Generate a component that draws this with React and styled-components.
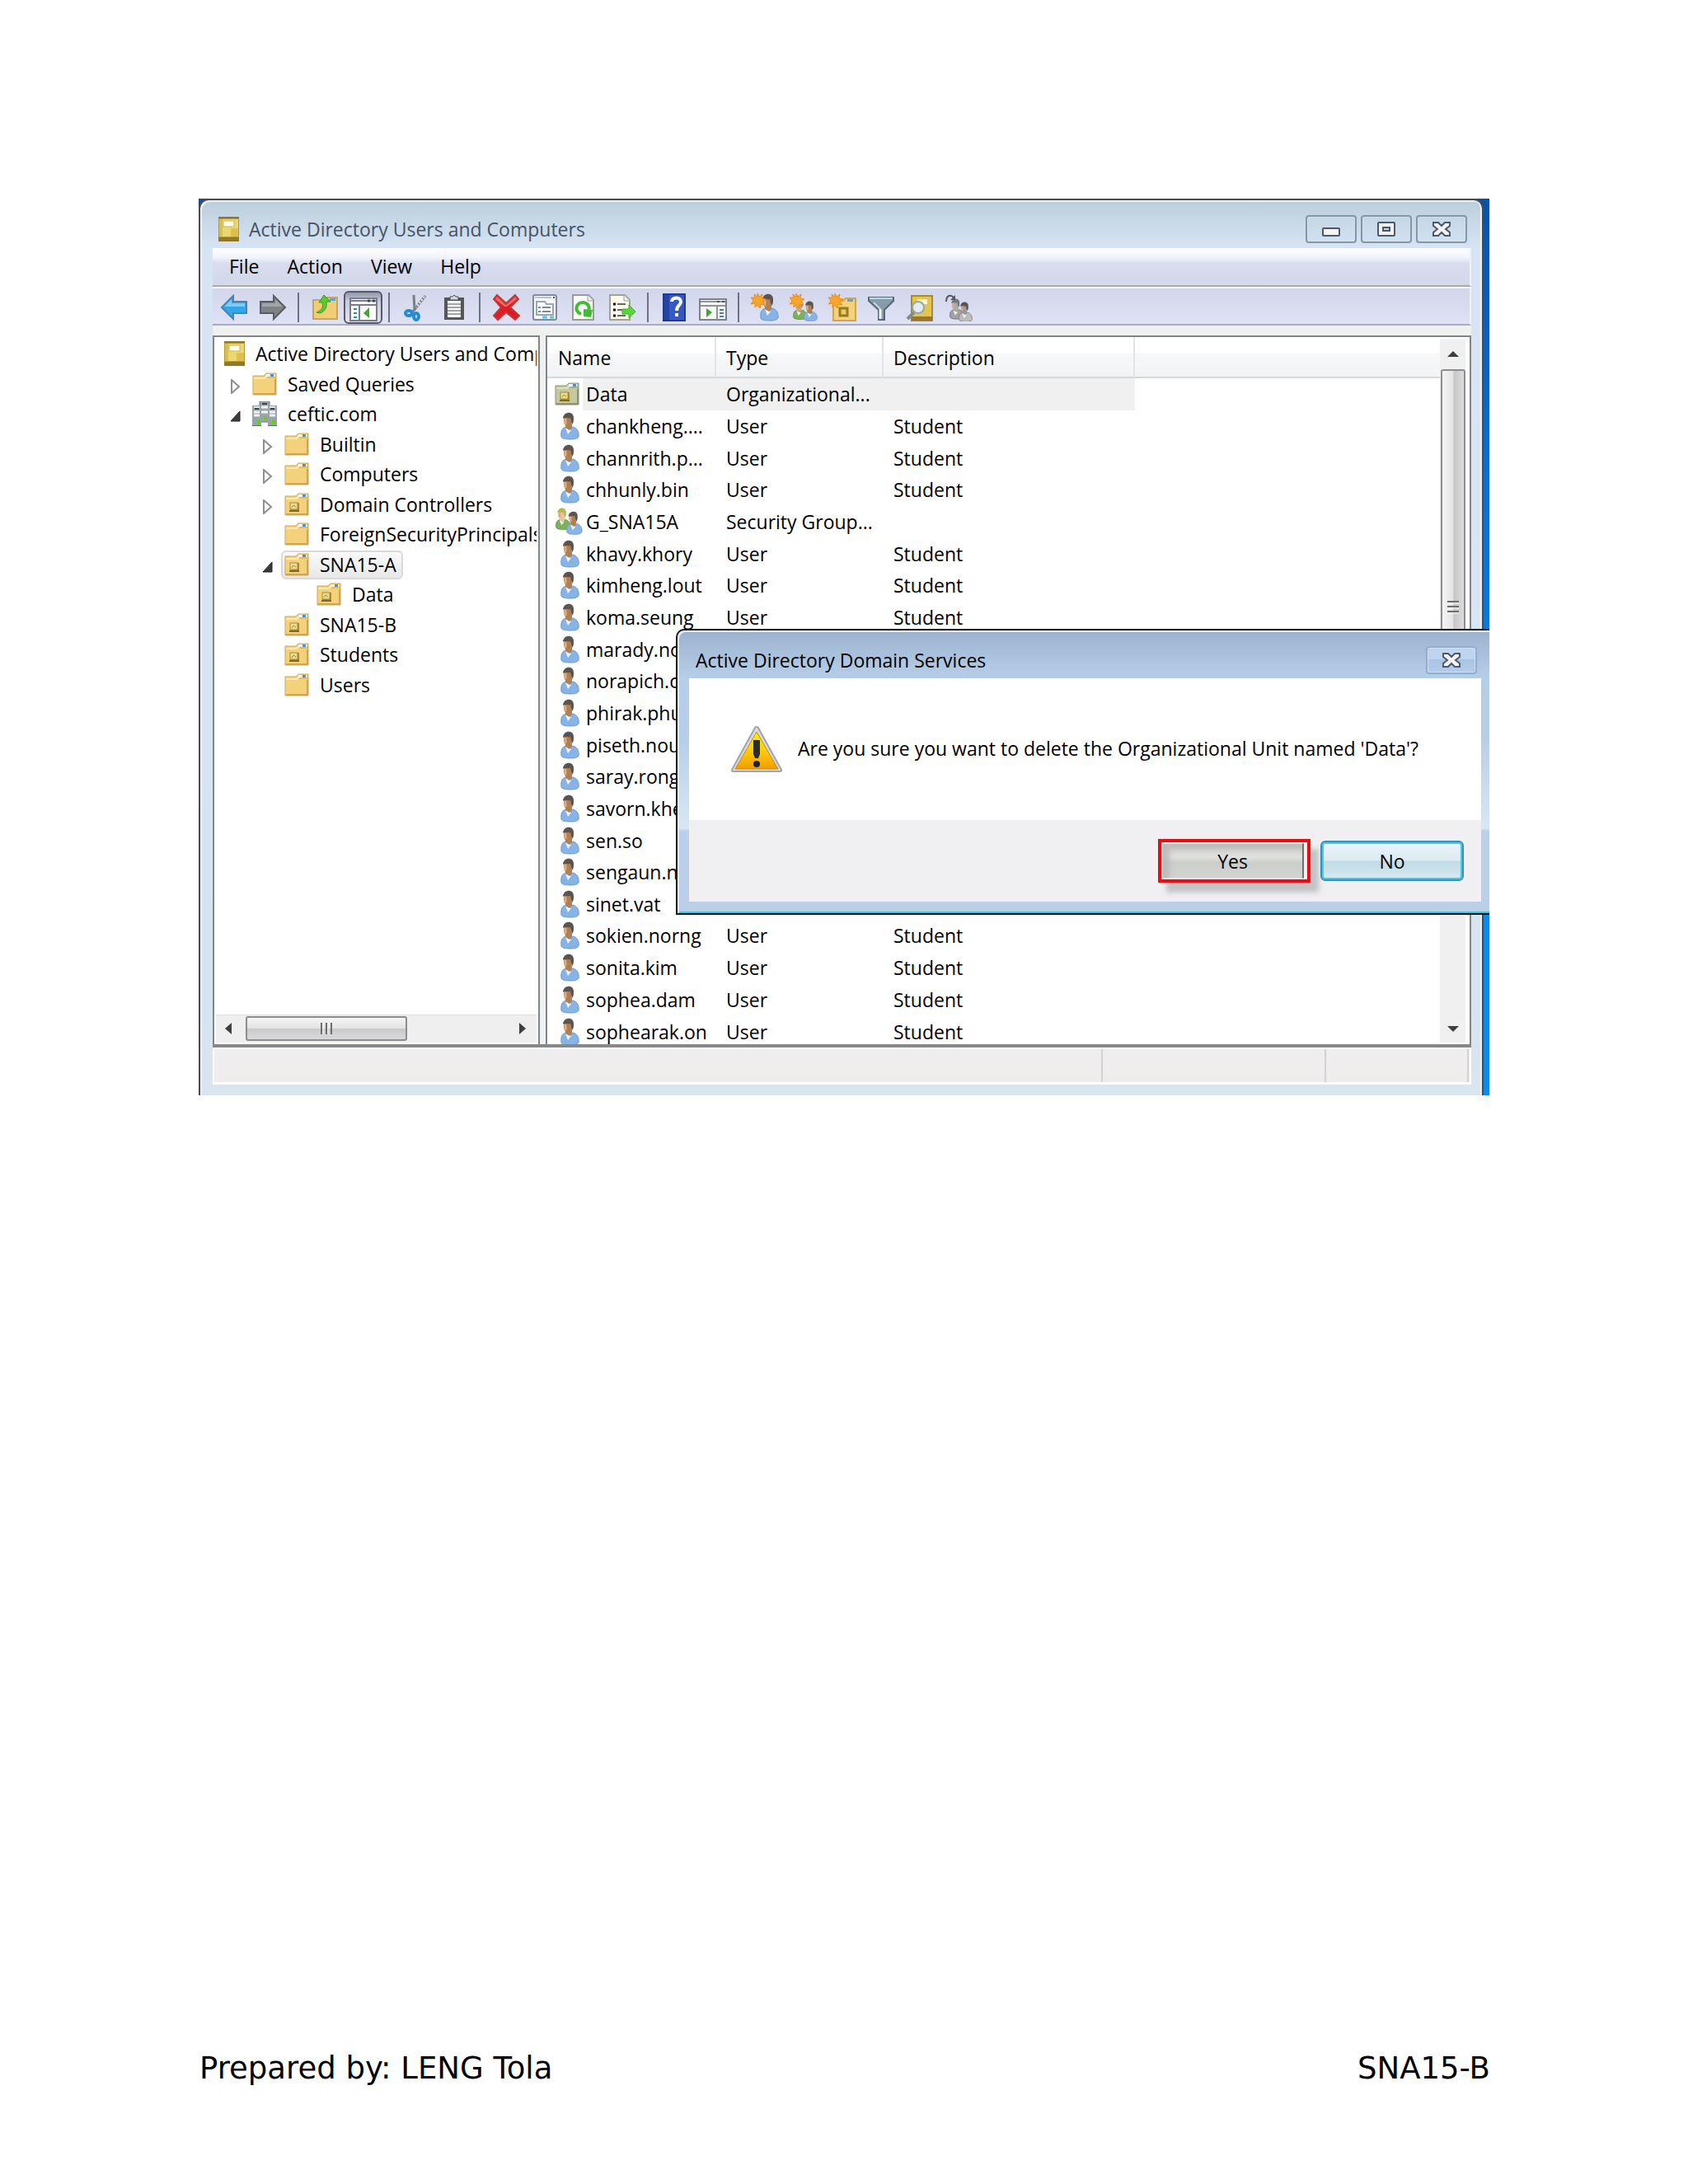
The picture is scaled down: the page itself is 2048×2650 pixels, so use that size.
import { useState } from "react";
import styled, { createGlobalStyle, css } from "styled-components";

const GlobalStyle = createGlobalStyle`
  * {
    box-sizing: border-box;
  }
  body {
    margin: 0;
    background-color: #fff;
  }
  button {
    margin: 0;
    padding: 0;
    border: none;
    background: none;
    color: inherit;
    font: inherit;
  }
`;

const Page = styled.div`
  min-height: 100vh;
  display: flex;
  flex-direction: column;
  justify-content: space-between;
  padding: 241px 240px 118px 241px;
`;

const Desktop = styled.main`
  position: relative;
  margin-right: 1px;
  padding-right: 7px;
  background: linear-gradient(#0553a4, #0a6fd0 30%, #0c8bea 80%);
  font-family: "Open Sans", "Noto Sans", sans-serif;
  font-size: 23px;
  line-height: 30px;
  color: #000;
  overflow: hidden;
`;

const Window = styled.section`
  display: flex;
  flex-direction: column;
  padding: 0 13px 13px 15px;
  border: 2px solid #484c52;
  border-bottom: none;
  border-radius: 12px 12px 0 0;
  background: linear-gradient(#bdcedb, #d6e4f4 58px, #d6e4f2 90%, #d9e5ef);
  box-shadow: inset 2px 2px 0 #e8eff6, inset -2px 0 0 #eef0f0;
`;

const TitleBar = styled.header`
  height: 58px;
  display: flex;
  align-items: center;
  gap: 12px;
  padding: 11px 5px 0 7px;
  color: #465366;
`;

const Title = styled.h1`
  flex: 1;
  margin: 0;
  font-size: inherit;
  font-weight: 400;
`;

const WindowButtons = styled.div`
  display: flex;
  gap: 5px;
`;

const WindowButton = styled.button`
  width: 62px;
  height: 34px;
  display: flex;
  align-items: center;
  justify-content: center;
  border: 2px solid #8696a9;
  border-radius: 4px;
  box-shadow: inset 0 0 0 1px #d3dfeb;
`;

const CloseButton = styled(WindowButton)`
  border-color: #92add0;
  background: linear-gradient(#bfd4ef 45%, #a9c3e2 46%, #b5cce9);
`;

const MenuBar = styled.nav`
  height: 47px;
  display: flex;
  align-items: center;
  gap: 34px;
  padding: 0 0 2px 20px;
  border-right: 2px solid #eef1fa;
  border-bottom: 2px solid #a9abb0;
  background: linear-gradient(#fff, #f2f3fb 25%, #d9dcee 42%, #d1d9ea);
`;

const Toolbar = styled.div`
  height: 47px;
  display: flex;
  align-items: center;
  padding: 2px 0 0 2px;
  border-top: 2px solid #f7f8fc;
  border-right: 2px solid #eef1fa;
  border-bottom: 2px solid #a9abc4;
  background: linear-gradient(#d1d6ea, #dfe2f4);
`;

const ToolGroup = styled.div`
  display: flex;
  align-items: center;
`;

const ToolButton = styled.button`
  width: 47px;
  height: 40px;
  display: flex;
  align-items: center;
  justify-content: center;
  ${(props) =>
    props.$pressed &&
    css`
      border: 2px solid #555a6b;
      border-radius: 6px;
      background: linear-gradient(#9298a8, #c8cddd 30%, #e0e3ee);
    `}
`;

const ToolSeparator = styled.span`
  width: 2px;
  height: 36px;
  margin: 0 7px;
  background-color: #6c7283;
`;

const Panes = styled.div`
  height: 876px;
  display: flex;
  gap: 7px;
  padding-top: 12px;
  border-bottom: 4px solid #87888a;
  background-color: #eff1ef;
`;

const TreePane = styled.div`
  width: 397px;
  flex-shrink: 0;
  display: flex;
  flex-direction: column;
  justify-content: space-between;
  padding-bottom: 2px;
  border: 2px solid #7f858a;
  border-bottom: none;
  background-color: #fff;
`;

// 12 rows share the height
const Tree = styled.ul`
  height: 438px;
  display: grid;
  grid-auto-rows: 1fr;
  margin: 3px 2px 0 0;
  padding: 0;
  list-style: none;
  overflow: hidden;
`;

const TreeRow = styled.li`
  display: flex;
  align-items: center;
  padding-left: ${(props) =>
    props.$level === 0 ? 8 : 15 + 39 * (props.$level - 1)}px;
  white-space: nowrap;
`;

const Expander = styled.span`
  width: 27px;
  flex-shrink: 0;
  display: flex;
  padding: 4px 0 0 5px;
`;

const TreeItem = styled.span`
  height: 35px;
  display: flex;
  align-items: center;
  gap: 13px;
  padding: 0 6px 2px 2px;
  border: 2px solid transparent;
  border-radius: 6px;
  ${(props) =>
    props.$selected &&
    css`
      border-color: #d9d9da;
      background: linear-gradient(#fafafa, #e8e8e9);
    `}
`;

const HScroll = styled.div`
  height: 34px;
  display: flex;
  align-items: center;
  justify-content: space-between;
  margin: 0 2px;
  padding: 0 12px 2px 10px;
  border-top: 1px solid #dddddf;
  background-color: #efeff0;
`;

const HTrack = styled.div`
  flex: 1;
  padding: 0 16px;
`;

const HThumb = styled.div`
  width: 196px;
  height: 30px;
  display: flex;
  align-items: center;
  justify-content: center;
  border: 2px solid #8d8d90;
  border-radius: 3px;
  background: linear-gradient(#f4f4f4, #e4e4e5 48%, #cacacc 52%, #d9d9da);
`;

const ListPane = styled.div`
  flex: 1;
  min-width: 0;
  display: flex;
  border: 2px solid #7f858a;
  border-bottom: none;
  background-color: #fff;
  overflow: hidden;
`;

const ListBox = styled.div`
  flex: 1;
  min-width: 0;
  overflow: hidden;
`;

const List = styled.table`
  width: 100%;
  height: 862px;
  table-layout: fixed;
  border-collapse: separate;
  border-spacing: 0;
  text-align: left;
  white-space: nowrap;
`;

const Col = styled.col`
  width: ${(props) => props.$width}px;
`;

const HeadCell = styled.th`
  height: 50px;
  padding: 2px 0 0 12px;
  border-right: 2px solid #e2e5e8;
  border-bottom: 2px solid #d6d8da;
  background: linear-gradient(#fff 40%, #f6f8fa 42%, #f1f3f5);
  font-weight: 400;
  &:first-child {
    padding-left: 13px;
  }
  &:last-child {
    border-right: none;
  }
`;

const Cell = styled.td`
  padding: 0 0 0 12px;
  ${(props) =>
    props.$selected &&
    css`
      background-color: #f0f0f1;
    `}
`;

const NameCell = styled(Cell)`
  padding: 0 0 0 9px;
  ${(props) =>
    props.$selected &&
    css`
      background: linear-gradient(90deg, #fff 43px, #f0f0f1 43px);
    `}
`;

const NameBox = styled.div`
  display: flex;
  align-items: center;
  gap: 4px;
  height: 34px;
`;

const VScroll = styled.div`
  width: 31px;
  display: flex;
  flex-direction: column;
  align-items: center;
  margin: 2px 5px 2px 0;
  background-color: #f0f0f1;
`;

const VTrack = styled.div`
  flex: 1;
  padding: 13px 0;
`;

const VThumb = styled.div`
  width: 30px;
  height: 576px;
  display: flex;
  align-items: center;
  justify-content: center;
  border: 2px solid #8d8d90;
  border-radius: 3px;
  background: linear-gradient(90deg, #f4f4f4, #e4e4e5 48%, #c6c6c8 54%, #dcdcdd);
`;

const StatusBar = styled.footer`
  height: 45px;
  display: flex;
  padding-right: 1px;
  border: 2px solid #fff;
  border-bottom-width: 3px;
  background: linear-gradient(#efeff0, #f0ecec);
`;

const StatusCell = styled.span`
  width: ${(props) => props.$width || "auto"};
  flex: ${(props) => (props.$width ? "none" : 1)};
  border-right: 2px solid #d4d3d4;
`;

const Dialog = styled.section`
  position: absolute;
  top: 522px;
  right: 0;
  width: 987px;
  display: flex;
  flex-direction: column;
  padding: 0 10px 14px 14px;
  border: 2px solid #14181d;
  border-right: none;
  border-radius: 10px 0 0 0;
  background: linear-gradient(
    #9bb3ce,
    #b6cee8 58px,
    #b6cee8 130px,
    #d9e7f5 240px,
    #bccfe8 244px
  );
  box-shadow: inset 2px 2px 0 #e4edf6, inset 0 -2px 0 #3fc3dd;
`;

const DialogTitleBar = styled.header`
  height: 58px;
  display: flex;
  align-items: center;
  justify-content: space-between;
  padding: 13px 5px 0 8px;
`;

const DialogTitle = styled.h2`
  margin: 0;
  font-size: inherit;
  font-weight: 400;
`;

const DialogBody = styled.div`
  height: 172px;
  display: flex;
  align-items: center;
  gap: 18px;
  padding-left: 50px;
  background-color: #fff;
`;

const Message = styled.p`
  margin: 0;
  padding-bottom: 2px;
  white-space: nowrap;
`;

const DialogActions = styled.div`
  height: 99px;
  display: flex;
  align-items: center;
  justify-content: flex-end;
  gap: 12px;
  padding: 0 21px 0 0;
  background-color: #f0eff1;
`;

const Highlight = styled.div`
  width: 185px;
  height: 53px;
  display: flex;
  padding-right: 4px;
  border: 4px solid #f40810;
  box-shadow: 10px 12px 6px #c4c4c6;
`;

const DialogButton = styled.button`
  width: 174px;
  height: 49px;
  border: 2px solid #3a8fb7;
  border-radius: 6px;
  background: linear-gradient(#eaf4fa, #dcebf2 48%, #c2dbe6 52%, #d5e9f1);
  box-shadow: inset 0 0 0 2px #45c8ea;
`;

const YesButton = styled(DialogButton)`
  width: 100%;
  height: 100%;
  border: 2px solid #e5e6e5;
  border-right-color: #70706f;
  border-radius: 3px;
  background: linear-gradient(#d0d1cf, #dfe1de 40%, #ccceca 55%, #d3d4d2);
  box-shadow: inset 8px 6px 6px #bcbdbb;
`;

const PageFooter = styled.footer`
  display: flex;
  justify-content: space-between;
  padding-left: 1px;
  font-family: "DejaVu Sans", sans-serif;
  font-size: 37px;
  line-height: 44px;
  color: #000;
`;

const Icon = styled.svg`
  display: block;
  flex-shrink: 0;
`;

function BookIcon() {
  return (
    <Icon width="25" height="30" viewBox="0 0 25 30">
      <rect width="25" height="30" fill="#b79a35" />
      <rect x="1" y="3" width="23" height="21" fill="#ecd873" />
      <rect x="1" y="3" width="4" height="21" fill="#d9bf52" />
      <rect x="15" y="14" width="9" height="10" fill="#dcc050" />
      <rect y="0" width="25" height="2" fill="#8d7630" />
      <rect x="6" y="5" width="13" height="7" fill="#fffdea" stroke="#cfb652" />
      <rect y="25" width="25" height="5" fill="#917824" />
    </Icon>
  );
}

function FolderIcon({ unit, muted, y }) {
  const fill = muted ? "#c5c9a1" : "#f4d27c";
  const shine = muted ? "#dfe2c2" : "#fbeab5";
  const edge = muted ? "#8b9077" : "#cfa552";
  return (
    <Icon y={y} width="30" height="28" viewBox="0 0 30 28">
      <path d="M1 4h13l3-3h12v26H1z" fill={fill} />
      <path d="M1 4h13l3-3h12v26H1z" fill="none" stroke={edge} strokeWidth="1" />
      <path d="M2 7h13l3-3" fill="none" stroke={shine} strokeWidth="2" />
      <path d="M18 6h11" stroke={edge} />
      <rect x="17" y="2" width="10" height="3" fill="#fff" />
      <rect x="22" y="2" width="4" height="3" fill="#4a91cf" />
      <path d="M28 8v18H2" fill="none" stroke={edge} strokeWidth="2" />
      {unit && (
        <>
          <rect x="7" y="12" width="11" height="11" fill="#a88a34" />
          <rect x="7" y="12" width="9" height="8" fill="#efdc8e" stroke="#a58a3a" />
          <path d="M9 18l2-3 3 2" stroke="#a88a34" fill="none" />
          <path d="M6 22h12" stroke="#7f6a24" strokeWidth="2" />
        </>
      )}
    </Icon>
  );
}

function DomainIcon() {
  return (
    <Icon width="30" height="30" viewBox="0 0 30 30">
      <rect x="9" width="12" height="25" fill="#9ba5ab" stroke="#6d777d" />
      <rect x="12" y="2" width="6" height="2" fill="#39434a" />
      <rect x="0" y="5" width="11" height="25" fill="#98a3aa" />
      <rect x="19" y="5" width="11" height="25" fill="#98a3aa" />
      <path d="M2 7h7M21 7h7" stroke="#dfe5e8" strokeWidth="2" />
      <path d="M3 9h5M22 9h5" stroke="#39434a" strokeWidth="2" />
      <path d="M2 13h7M21 13h7M2 17h7M21 17h7M11 7h8M11 13h8" stroke="#f2f5f6" strokeWidth="3" />
      <path d="M0 30h11M19 30h11" stroke="#5f696f" strokeWidth="2" />
      <rect x="6" y="23" width="4" height="5" fill="#62cf20" />
      <rect x="14" y="18" width="4" height="4" fill="#62cf20" />
      <rect x="24" y="23" width="4" height="5" fill="#62cf20" />
    </Icon>
  );
}

function Person({ x = 0, y = 0, scale = 1, hair = "#5b5450", skin = "#b08055", shirt = "#86b4e6", edge = "#6f99c8" }) {
  return (
    <g transform={`translate(${x} ${y}) scale(${scale})`}>
      <path
        d="M1 30c-1-7 1-11 6-12l4 2 4-2c5 1 8 6 7 12-2 3-7 3-10 3S2 33 1 30z"
        fill={shirt}
        stroke={edge}
      />
      <path d="M6 19l3 8 4-5z" fill="#eef5fc" />
      <path d="M6 14h8v5l-3 3-5-3z" fill={skin} />
      <ellipse cx="9" cy="10" rx="5" ry="8" fill={skin} />
      <path d="M3 8c0-9 13-10 13-1 0 4 0 6-2 8l-2-8c-3 1-7-1-9 1z" fill={hair} />
      <path d="M6 8v7" stroke="#dbac80" strokeWidth="3" />
    </g>
  );
}

function UserIcon() {
  return (
    <Icon width="34" height="34" viewBox="0 0 34 34">
      <Person x={7} y={0} />
    </Icon>
  );
}

function GroupIcon() {
  return (
    <Icon width="34" height="34" viewBox="0 0 34 34">
      <Person x={1} y={0} scale={0.8} hair="#b9b550" skin="#e6c79a" shirt="#7fb05a" edge="#588c3d" />
      <Person x={14} y={4} scale={0.86} />
    </Icon>
  );
}

function Star() {
  return (
    <path
      d="M8 0l2 4 4-3-1 5 5 1-4 3 3 4-5-1-1 5-3-4-3 3v-5l-5 1 3-4-3-4 5 0-1-4 4 3z"
      fill="#f8a52b"
      stroke="#ee8a1c"
    />
  );
}

function CrossIcon() {
  return (
    <Icon width="24" height="20" viewBox="0 0 24 20">
      <path
        d="M2 2h6l4 4 4-4h6v4l-5 4 5 4v4h-6l-4-4-4 4H2v-4l5-4-5-4z"
        fill="#f3f3f3"
        stroke="#4c586b"
        strokeWidth="2"
      />
    </Icon>
  );
}

const toolIcons = {
  back: (
    <>
      <path d="M2 17L16 3v7h16v14H16v7z" fill="#35a6e9" stroke="#3f86b8" strokeWidth="2" />
      <path d="M5 16L14 7v5h16v4z" fill="#7cccf5" />
    </>
  ),
  forward: (
    <>
      <path d="M32 17L18 3v7H2v14h16v7z" fill="#808386" stroke="#595c60" strokeWidth="2" />
      <path d="M29 16l-9-9v5H4v4z" fill="#a2a5a8" />
    </>
  ),
  up: (
    <>
      <path d="M3 8h14l3-3h12v26H3z" fill="#f1cd76" stroke="#cda452" strokeWidth="2" />
      <rect x="23" y="6" width="7" height="3" fill="#62a4d6" />
      <path d="M7 23c8-3 8-7 7-12h-4l6-9 8 8h-5c1 6-1 12-8 14z" fill="#56cc2e" stroke="#3c9826" />
    </>
  ),
  tree: (
    <>
      <rect x="1" y="6" width="32" height="27" fill="#fafafa" stroke="#777d8a" strokeWidth="2" />
      <path d="M2 9h30M2 14h30" stroke="#777d8a" strokeWidth="2" />
      <path d="M22 9h3M28 9h3" stroke="#40444d" strokeWidth="3" />
      <path d="M12 14v18" stroke="#777d8a" strokeWidth="2" />
      <path d="M5 19h4M5 24h4M5 29h4" stroke="#3288ae" strokeWidth="2" />
      <path d="M24 17v13l-7-6z" fill="#3fa829" />
    </>
  ),
  cut: (
    <>
      <path d="M15 2l1 19M29 3L14 22" stroke="#777f88" strokeWidth="3" />
      <path d="M28 4L18 17" stroke="#f7f7f7" strokeWidth="2" strokeDasharray="2 2" />
      <ellipse cx="9" cy="24" rx="4" ry="3" fill="none" stroke="#258bd2" strokeWidth="4" />
      <ellipse cx="18" cy="28" rx="3" ry="4" fill="none" stroke="#258bd2" strokeWidth="4" />
    </>
  ),
  paste: (
    <>
      <rect x="5" y="5" width="24" height="27" fill="#555657" />
      <rect x="9" y="9" width="16" height="20" fill="#f6f6f6" />
      <path d="M9 13h16M9 17h16M9 21h16M9 25h16" stroke="#a2a4a6" strokeWidth="2" />
      <path d="M12 8V4h3l2-2 2 2h3v4z" fill="#d6d8da" stroke="#4b4c4d" />
    </>
  ),
  remove: (
    <>
      <path d="M6 2l11 10L28 2l4 5-10 10 11 10-5 5-11-9-10 9-5-5 9-10L2 7z" fill="#e01b22" stroke="#bd3a3e" strokeWidth="2" />
      <path d="M6 4l11 10L28 4l2 3-12 9h-3L4 7z" fill="#f27a7b" opacity="0.8" />
    </>
  ),
  properties: (
    <>
      <rect x="3" y="2" width="28" height="30" rx="2" fill="#f5f7fa" stroke="#7f8b9a" strokeWidth="2" />
      <path d="M5 5h20" stroke="#bac3cc" strokeWidth="2" />
      <path d="M27 5h2" stroke="#4b5663" strokeWidth="2" />
      <path d="M7 10h10l2 3h8v13H7z" fill="#fff" stroke="#9ba6b2" strokeWidth="2" />
      <path d="M14 17h10M14 22h10" stroke="#7e8892" strokeWidth="2" />
      <path d="M9 17h3M9 22h3" stroke="#3b9fd0" strokeWidth="2" />
      <path d="M14 29h6M23 29h5" stroke="#4fc6e5" strokeWidth="3" />
    </>
  ),
  refresh: (
    <>
      <path d="M4 2h19l6 6v24H4z" fill="#fbfbf6" stroke="#9a9c9b" strokeWidth="2" />
      <path d="M22 2v7h7" fill="#eee" stroke="#9a9c9b" />
      <path d="M14 25c-10-4-5-15 3-14 6 1 8 6 6 11" fill="none" stroke="#46b93b" strokeWidth="4" />
      <path d="M17 19l11 1-2 9-9-1z" fill="#46b93b" />
    </>
  ),
  exportList: (
    <>
      <path d="M2 2h18l6 6v24H2z" fill="#fdfcec" stroke="#a3a394" strokeWidth="2" />
      <path d="M19 2v7h7" fill="#eee" stroke="#a3a394" />
      <path d="M11 13h10M11 20h8M11 27h10" stroke="#666" strokeWidth="2" />
      <path d="M6 13h3M6 20h3M6 27h3" stroke="#111" strokeWidth="3" />
      <path d="M17 19h8v-5l8 8-8 8v-5h-8z" fill="#5ad63c" stroke="#3fae2c" />
    </>
  ),
  help: (
    <>
      <rect x="4" y="1" width="26" height="32" fill="#3458c4" stroke="#1d3a94" strokeWidth="2" />
      <rect x="5" y="2" width="6" height="30" fill="#26439f" />
      <path d="M14 10c0-6 11-6 11 0 0 5-5 4-5 11" fill="none" stroke="#fff" strokeWidth="4" />
      <rect x="18" y="24" width="4" height="4" fill="#fff" />
    </>
  ),
  panel: (
    <>
      <rect x="1" y="7" width="32" height="25" fill="#f8f8f6" stroke="#7b828b" strokeWidth="2" />
      <path d="M2 10h30M2 15h30" stroke="#8d949c" strokeWidth="2" />
      <path d="M22 10h3M28 10h3" stroke="#4b5057" strokeWidth="2" />
      <path d="M22 15v17" stroke="#8d949c" strokeWidth="2" />
      <path d="M25 20h5M25 24h5M25 28h5" stroke="#3a81b7" strokeWidth="2" />
      <path d="M9 18v11l7-6z" fill="#3fa829" />
    </>
  ),
  newUser: (
    <>
      <Person x={11} y={0} />
      <Star />
    </>
  ),
  newGroup: (
    <>
      <Person x={4} y={7} scale={0.74} hair="#9a9850" skin="#d6a577" shirt="#7fb05a" edge="#588c3d" />
      <Person x={17} y={9} scale={0.74} />
      <Star />
    </>
  ),
  newUnit: (
    <>
      <path d="M6 9h12l3-3h12v27H6z" fill="#f4d27c" stroke="#cfa552" strokeWidth="2" />
      <rect x="23" y="7" width="7" height="3" fill="#62a4d6" />
      <rect x="14" y="18" width="9" height="9" fill="#e8cd6c" stroke="#99791f" strokeWidth="3" />
      <Star />
    </>
  ),
  filter: (
    <>
      <path d="M2 5h30v4L21 20v12h-7V20L2 9z" fill="#899ba8" stroke="#566876" strokeWidth="2" />
      <path d="M3 6h28" stroke="#b9dbe4" strokeWidth="2" />
      <path d="M16 19v12" stroke="#edf5f9" strokeWidth="3" />
      <path d="M8 11l8 8" stroke="#c8d6de" strokeWidth="2" />
    </>
  ),
  find: (
    <>
      <rect x="7" y="3" width="25" height="30" fill="#e4c551" stroke="#aa8b2c" strokeWidth="2" />
      <rect x="7" y="28" width="25" height="5" fill="#98792a" />
      <rect x="14" y="7" width="12" height="6" fill="#fff7cf" />
      <path d="M10 23l-8 8" stroke="#868a8c" strokeWidth="4" />
      <circle cx="15" cy="17" r="7" fill="#e2edf0" stroke="#9aa5a9" strokeWidth="2" />
    </>
  ),
  addToGroup: (
    <>
      <Person x={6} y={6} scale={0.76} hair="#777" skin="#aaa" shirt="#a2a2a2" edge="#666" />
      <Person x={17} y={10} scale={0.74} hair="#555" skin="#999" shirt="#bcbcbc" edge="#777" />
      <path d="M2 10c0-8 6-9 9-5" fill="none" stroke="#55595e" strokeWidth="2" />
      <path d="M13 2v6H7z" fill="#55595e" />
    </>
  ),
};

const toolGroups = [
  [["back", "Back"], ["forward", "Forward"]],
  [["up", "Up one level"], ["tree", "Show console tree"]],
  [["cut", "Cut"], ["paste", "Paste"]],
  [
    ["remove", "Delete"],
    ["properties", "Properties"],
    ["refresh", "Refresh"],
    ["exportList", "Export list"],
  ],
  [["help", "Help"], ["panel", "Show action pane"]],
  [
    ["newUser", "New user"],
    ["newGroup", "New group"],
    ["newUnit", "New organizational unit"],
    ["filter", "Filter"],
    ["find", "Find"],
    ["addToGroup", "Add to group"],
  ],
];

const treeRows = [
  { label: "Active Directory Users and Computers", level: 0, icon: "book" },
  { label: "Saved Queries", level: 1, state: "closed" },
  { label: "ceftic.com", level: 1, state: "open", icon: "domain" },
  { label: "Builtin", level: 2, state: "closed" },
  { label: "Computers", level: 2, state: "closed" },
  { label: "Domain Controllers", level: 2, state: "closed", icon: "unit" },
  { label: "ForeignSecurityPrincipals", level: 2 },
  { label: "SNA15-A", level: 2, state: "open", icon: "unit" },
  { label: "Data", level: 3, icon: "unit" },
  { label: "SNA15-B", level: 2, icon: "unit" },
  { label: "Students", level: 2, icon: "unit" },
  { label: "Users", level: 2 },
];

const users = (names) =>
  names.map((name) => ({ name, type: "User", description: "Student" }));

const objects = [
  { name: "Data", type: "Organizational...", icon: "unit" },
  ...users(["chankheng....", "channrith.p...", "chhunly.bin"]),
  { name: "G_SNA15A", type: "Security Group...", icon: "group" },
  ...users([
    "khavy.khory",
    "kimheng.lout",
    "koma.seung",
    "marady.no",
    "norapich.c",
    "phirak.phu",
    "piseth.nou",
    "saray.rong",
    "savorn.khe",
    "sen.so",
    "sengaun.n",
    "sinet.vat",
    "sokien.norng",
    "sonita.kim",
    "sophea.dam",
    "sophearak.on",
  ]),
];

function TreeIcon({ icon }) {
  if (icon === "book") return <BookIcon />;
  if (icon === "domain") return <DomainIcon />;
  return <FolderIcon unit={icon === "unit"} />;
}

function ObjectIcon({ icon }) {
  if (icon === "group") return <GroupIcon />;
  if (icon === "unit") {
    return (
      <Icon width="34" height="34" viewBox="0 0 34 34">
        <FolderIcon unit muted y="3" />
      </Icon>
    );
  }
  return <UserIcon />;
}

function ExpanderIcon({ state }) {
  if (state === "open") {
    return (
      <Icon width="12" height="14" viewBox="0 0 12 14">
        <path d="M11 1v12H0z" fill="#3b3b3d" stroke="#222" />
      </Icon>
    );
  }
  return (
    <Icon width="12" height="18" viewBox="0 0 12 18">
      <path d="M1 1l9 8-9 8z" fill="#fff" stroke="#8f8f91" strokeWidth="2" />
    </Icon>
  );
}

function ConsoleTree() {
  const [selected, setSelected] = useState("SNA15-A");
  return (
    <TreePane>
      <Tree>
        {treeRows.map((row) => (
          <TreeRow key={row.label} $level={row.level}>
            {row.level > 0 && (
              <Expander>
                {row.state && <ExpanderIcon state={row.state} />}
              </Expander>
            )}
            <TreeItem
              $selected={row.label === selected}
              onClick={() => setSelected(row.label)}
            >
              <TreeIcon icon={row.icon} />
              {row.label}
            </TreeItem>
          </TreeRow>
        ))}
      </Tree>
      <HScroll>
        <Icon width="10" height="14" viewBox="0 0 10 14">
          <path d="M9 0v14L1 7z" fill="#3f3f42" />
        </Icon>
        <HTrack>
          <HThumb>
            <Icon width="16" height="14" viewBox="0 0 16 14">
              <path d="M2 0v14M8 0v14M14 0v14" stroke="#6d6d70" strokeWidth="2" />
              <path d="M4 0v14M10 0v14" stroke="#f7f7f7" />
            </Icon>
          </HThumb>
        </HTrack>
        <Icon width="10" height="14" viewBox="0 0 10 14">
          <path d="M1 0v14l8-7z" fill="#3f3f42" />
        </Icon>
      </HScroll>
    </TreePane>
  );
}

function ObjectList() {
  return (
    <ListPane>
      <ListBox>
        <List>
          <colgroup>
            <Col $width={205} />
            <Col $width={203} />
            <Col $width={305} />
            <col />
          </colgroup>
          <thead>
            <tr>
              <HeadCell>Name</HeadCell>
              <HeadCell>Type</HeadCell>
              <HeadCell>Description</HeadCell>
              <HeadCell as="td" />
            </tr>
          </thead>
          <tbody>
            {objects.map((item) => {
              const selected = item.name === "Data";
              return (
                <tr key={item.name}>
                  <NameCell $selected={selected}>
                    <NameBox>
                      <ObjectIcon icon={item.icon} />
                      {item.name}
                    </NameBox>
                  </NameCell>
                  <Cell $selected={selected}>{item.type}</Cell>
                  <Cell $selected={selected}>{item.description}</Cell>
                  <td />
                </tr>
              );
            })}
          </tbody>
        </List>
      </ListBox>
      <VScroll>
        <Icon width="14" height="24" viewBox="0 0 14 24">
          <path d="M0 22h14l-7-7z" fill="#3f3f42" />
        </Icon>
        <VTrack>
          <VThumb>
            <Icon width="14" height="17" viewBox="0 0 14 17">
              <path d="M0 2h14M0 8h14M0 14h14" stroke="#6d6d70" strokeWidth="2" />
              <path d="M0 4h14M0 10h14M0 16h14" stroke="#f7f7f7" />
            </Icon>
          </VThumb>
        </VTrack>
        <Icon width="14" height="24" viewBox="0 0 14 24">
          <path d="M0 4h14l-7 7z" fill="#3f3f42" />
        </Icon>
      </VScroll>
    </ListPane>
  );
}

function WarningIcon() {
  return (
    <Icon width="64" height="58" viewBox="0 0 64 58">
      <defs>
        <linearGradient id="warn" x1="0" y1="0" x2="0" y2="1">
          <stop offset="0" stopColor="#fff200" />
          <stop offset="0.6" stopColor="#fcc40c" />
          <stop offset="1" stopColor="#f09d00" />
        </linearGradient>
      </defs>
      <path d="M32 2q2 0 3 3l27 49q1 2-2 2H4q-3 0-2-2L29 5q1-3 3-3z" fill="#dcdce0" stroke="#a4a5aa" strokeWidth="2" />
      <path d="M32 8l26 45H6z" fill="url(#warn)" stroke="#c98b10" />
      <path d="M28 18h8v17l-2 5h-4l-2-5z" fill="#2b2c26" />
      <circle cx="32" cy="47" r="4" fill="#1f2330" />
    </Icon>
  );
}

function ConfirmDialog() {
  return (
    <Dialog role="dialog" aria-labelledby="dialog-title">
      <DialogTitleBar>
        <DialogTitle id="dialog-title">
          Active Directory Domain Services
        </DialogTitle>
        <CloseButton aria-label="Close dialog">
          <CrossIcon />
        </CloseButton>
      </DialogTitleBar>
      <DialogBody>
        <WarningIcon />
        <Message>
          Are you sure you want to delete the Organizational Unit named 'Data'?
        </Message>
      </DialogBody>
      <DialogActions>
        <Highlight>
          <YesButton>Yes</YesButton>
        </Highlight>
        <DialogButton>No</DialogButton>
      </DialogActions>
    </Dialog>
  );
}

function App() {
  return (
    <>
      <GlobalStyle />
      <Page>
        <Desktop>
          <Window>
            <TitleBar>
              <BookIcon />
              <Title>Active Directory Users and Computers</Title>
              <WindowButtons>
                <WindowButton aria-label="Minimize">
                  <Icon width="24" height="20" viewBox="0 0 24 20">
                    <rect x="2" y="9" width="20" height="9" rx="1" fill="#f3f3f3" stroke="#4c586b" strokeWidth="2" />
                  </Icon>
                </WindowButton>
                <WindowButton aria-label="Maximize">
                  <Icon width="24" height="20" viewBox="0 0 24 20">
                    <rect x="2" y="2" width="20" height="16" rx="1" fill="#f3f3f3" stroke="#4c586b" strokeWidth="2" />
                    <rect x="8" y="8" width="8" height="4" fill="#c4d2de" stroke="#4c586b" strokeWidth="2" />
                  </Icon>
                </WindowButton>
                <WindowButton aria-label="Close">
                  <CrossIcon />
                </WindowButton>
              </WindowButtons>
            </TitleBar>
            <MenuBar>
              {["File", "Action", "View", "Help"].map((name) => (
                <button key={name}>{name}</button>
              ))}
            </MenuBar>
            <Toolbar>
              {toolGroups.map((group, index) => (
                <ToolGroup key={group[0][0]}>
                  {index > 0 && <ToolSeparator />}
                  {group.map(([name, label]) => (
                    <ToolButton
                      key={name}
                      aria-label={label}
                      $pressed={name === "tree"}
                    >
                      <Icon width="34" height="34" viewBox="0 0 34 34">
                        {toolIcons[name]}
                      </Icon>
                    </ToolButton>
                  ))}
                </ToolGroup>
              ))}
            </Toolbar>
            <Panes>
              <ConsoleTree />
              <ObjectList />
            </Panes>
            <StatusBar>
              <StatusCell />
              <StatusCell $width="271px" />
              <StatusCell $width="173px" />
            </StatusBar>
          </Window>
          <ConfirmDialog />
        </Desktop>
        <PageFooter>
          <span>Prepared by: LENG Tola</span>
          <span>SNA15-B</span>
        </PageFooter>
      </Page>
    </>
  );
}

export default App;
